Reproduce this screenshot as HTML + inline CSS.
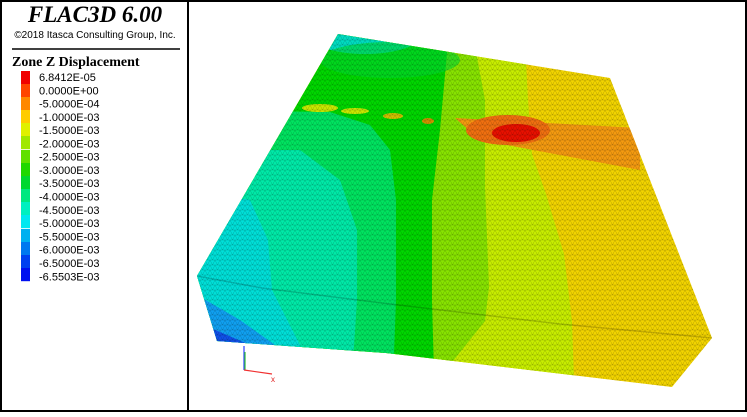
<!DOCTYPE html>
<html><head><meta charset="utf-8"><style>
body{margin:0;width:747px;height:412px;background:#fff;overflow:hidden;font-family:"Liberation Sans",sans-serif}
</style></head><body>
<svg width="747" height="412" viewBox="0 0 747 412" xmlns="http://www.w3.org/2000/svg">
<defs>
<pattern id="m" width="5" height="5" patternUnits="userSpaceOnUse">
<path d="M0 0L5 0M0 0L2.5 5M5 0L2.5 5M0 5L5 5" stroke="#000" stroke-opacity="0.3" stroke-width="0.4" fill="none"/>
</pattern>
<clipPath id="c"><polygon points="338,34 610,78 712,338 672,387 386,353 217,341 197,276"/></clipPath>
</defs>
<rect x="1" y="1" width="745" height="410" fill="#fff" stroke="#000" stroke-width="2"/>
<line x1="188" y1="0" x2="188" y2="412" stroke="#000" stroke-width="2"/>
<g clip-path="url(#c)">
<rect x="190" y="20" width="530" height="390" fill="#f2d400"/>
<polygon points="190,20 524,20 528,100 532,154 546,194 564,254 572,321 575,410 190,410" fill="#c8ee00"/>
<polygon points="190,20 470,20 485,100 485,187 489,287 485,321 453,361 440,410 190,410" fill="#88e400"/>
<polygon points="190,20 450,20 440,130 432,200 432,300 435,410 190,410" fill="#00d800"/>
<polygon points="190,110 330,112 370,125 390,150 396,200 396,300 392,410 190,410" fill="#00e460"/>
<polygon points="190,150 300,150 340,180 357,230 357,300 350,410 190,410" fill="#00eaa8"/>
<polygon points="190,190 250,200 268,240 272,290 300,345 300,410 190,410" fill="#00e0d8"/>
<ellipse cx="365" cy="32" rx="60" ry="22" fill="#00dcc0"/>
<ellipse cx="390" cy="60" rx="70" ry="18" fill="#00d830" opacity="0.6"/>
<polygon points="455,118 640,128 640,170 560,155 480,140" fill="#f49a10"/>
<ellipse cx="508" cy="130" rx="42" ry="15" fill="#f07010"/>
<ellipse cx="516" cy="133" rx="24" ry="9" fill="#e81000"/>
<ellipse cx="320" cy="108" rx="18" ry="4" fill="#c8e800"/>
<ellipse cx="355" cy="111" rx="14" ry="3" fill="#c8e800"/>
<ellipse cx="393" cy="116" rx="10" ry="3" fill="#d0c000"/>
<ellipse cx="428" cy="121" rx="6" ry="3" fill="#d09000"/>
<polygon points="197,295 240,320 275,345 197,345" fill="#10a0f0"/>
<polygon points="197,322 250,345 197,345" fill="#1050e8"/>
<rect x="190" y="20" width="530" height="390" fill="url(#m)"/>
<polyline points="197,276 262,288 390,304 560,324 712,338" stroke="#000" stroke-opacity="0.18" stroke-width="1.5" fill="none"/>
</g>
<g stroke-width="1.2" fill="none">
<line x1="244" y1="370" x2="244" y2="346" stroke="#3040ff"/>
<line x1="245" y1="370" x2="245" y2="352" stroke="#30c030"/>
<line x1="244" y1="370" x2="272" y2="374" stroke="#f03030"/>
</g>
<text x="271" y="382" font-size="8" fill="#e02020">x</text>
<text x="95" y="22" text-anchor="middle" font-family="Liberation Serif,serif" font-style="italic" font-weight="bold" font-size="23">FLAC3D 6.00</text>
<text x="95" y="38" text-anchor="middle" font-size="10">©2018 Itasca Consulting Group, Inc.</text>
<line x1="12" y1="49" x2="180" y2="49" stroke="#000" stroke-width="1.5"/>
<text x="12" y="66" font-family="Liberation Serif,serif" font-weight="bold" font-size="14">Zone Z Displacement</text>
<g font-size="11">
<rect x="21" y="71" width="9" height="13.2" fill="#f00000"/><text x="39" y="81">6.8412E-05</text>
<rect x="21" y="84" width="9" height="13.2" fill="#ff4400"/><text x="39" y="94.3">0.0000E+00</text>
<rect x="21" y="97" width="9" height="13.2" fill="#ff8800"/><text x="39" y="107.5">-5.0000E-04</text>
<rect x="21" y="110" width="9" height="13.2" fill="#ffcc00"/><text x="39" y="120.8">-1.0000E-03</text>
<rect x="21" y="123" width="9" height="13.2" fill="#e0f000"/><text x="39" y="134">-1.5000E-03</text>
<rect x="21" y="136" width="9" height="13.2" fill="#a0e800"/><text x="39" y="147.3">-2.0000E-03</text>
<rect x="21" y="150" width="9" height="13.2" fill="#60e000"/><text x="39" y="160.6">-2.5000E-03</text>
<rect x="21" y="163" width="9" height="13.2" fill="#20d800"/><text x="39" y="173.9">-3.0000E-03</text>
<rect x="21" y="176" width="9" height="13.2" fill="#00d830"/><text x="39" y="187.2">-3.5000E-03</text>
<rect x="21" y="189" width="9" height="13.2" fill="#00e880"/><text x="39" y="200.5">-4.0000E-03</text>
<rect x="21" y="202" width="9" height="13.2" fill="#00f0c0"/><text x="39" y="213.8">-4.5000E-03</text>
<rect x="21" y="215" width="9" height="13.2" fill="#00e8f0"/><text x="39" y="227.1">-5.0000E-03</text>
<rect x="21" y="229" width="9" height="13.2" fill="#00b0f0"/><text x="39" y="240.4">-5.5000E-03</text>
<rect x="21" y="242" width="9" height="13.2" fill="#0078f0"/><text x="39" y="253.7">-6.0000E-03</text>
<rect x="21" y="255" width="9" height="13.2" fill="#0040f0"/><text x="39" y="267">-6.5000E-03</text>
<rect x="21" y="268" width="9" height="13.2" fill="#0010f0"/><text x="39" y="280.3">-6.5503E-03</text>
</g>
</svg>
</body></html>
